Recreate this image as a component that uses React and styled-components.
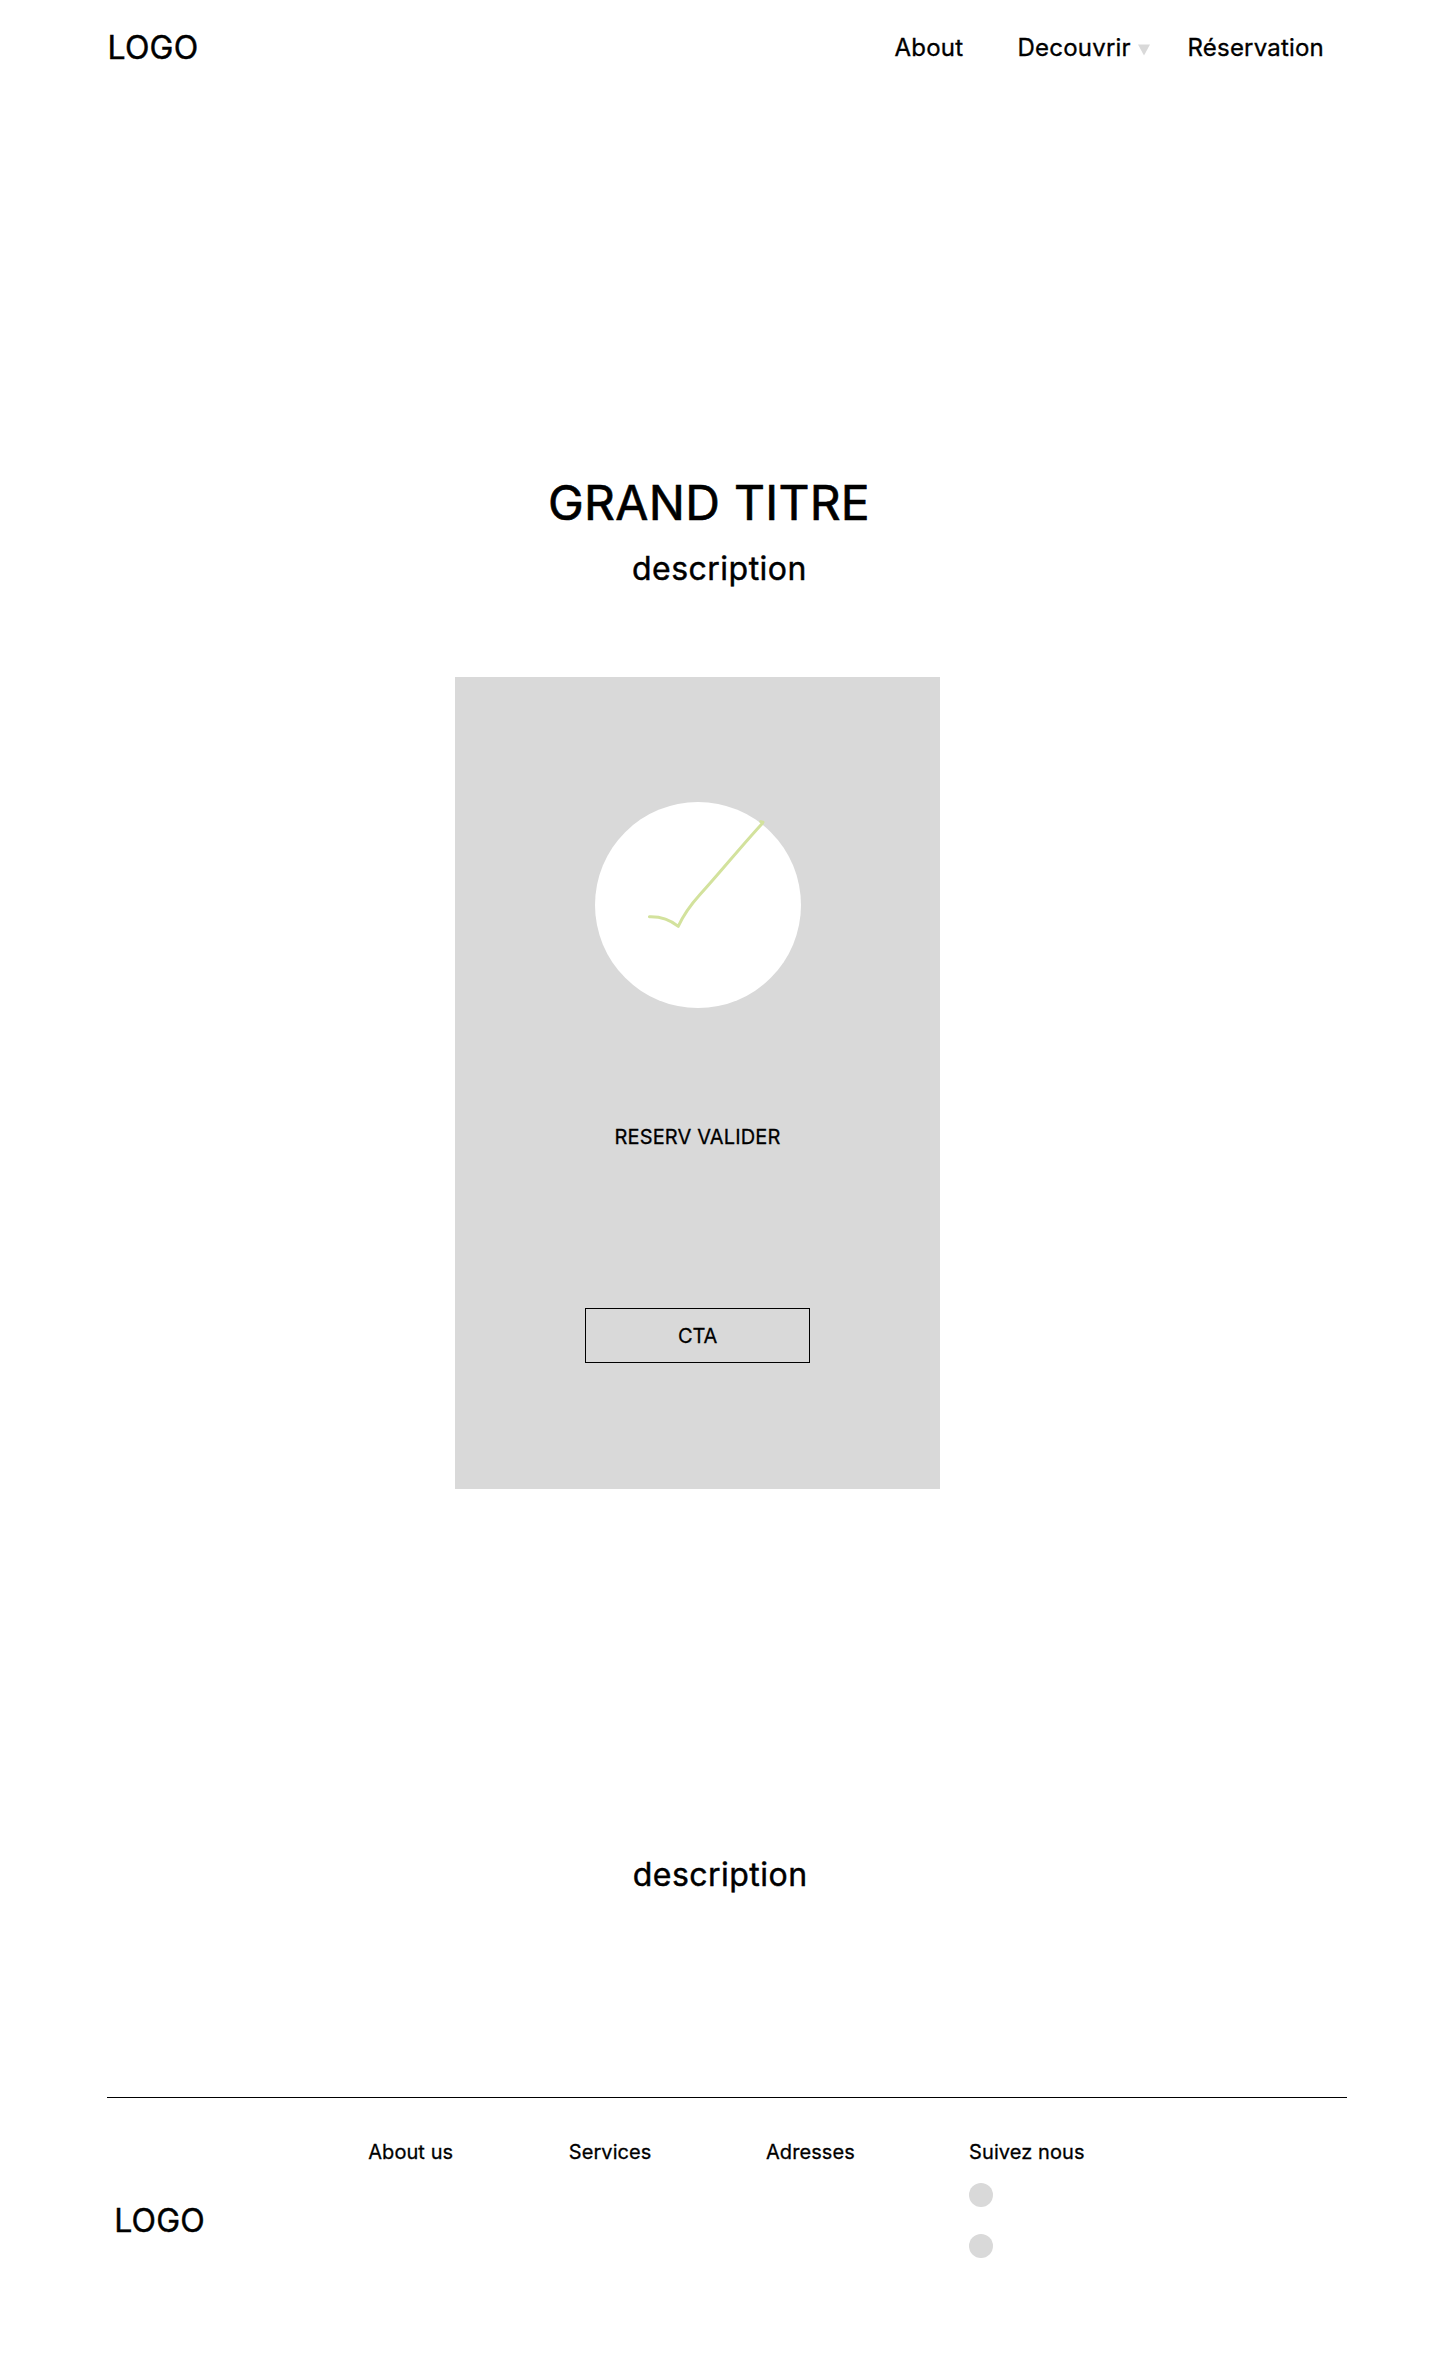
import React from "react";
import styled, { createGlobalStyle } from "styled-components";

const GlobalStyle = createGlobalStyle`
  *, *::before, *::after {
    box-sizing: border-box;
    -webkit-text-stroke: 0.014em #000;
  }
  body {
    margin: 0;
    background: #fff;
    color: #000;
    font-family: Inter, "Liberation Sans", sans-serif;
    font-weight: 400;
  }
`;

const Page = styled.div`
  display: flex;
  flex-direction: column;
  width: 1440px;
  height: 2371px;
  overflow: hidden;
`;

const Header = styled.header`
  display: flex;
  align-items: flex-start;
  justify-content: space-between;
  height: 96px;
  padding: 28px 116px 0 107.5px;
`;

const Logo = styled.div`
  font-size: 32px;
  line-height: 40px;
  letter-spacing: 0.2px;
`;

const Nav = styled.nav`
  display: flex;
  align-items: center;
  padding-top: 5px;
`;

const NavLink = styled.a`
  display: flex;
  align-items: center;
  gap: 7.3px;
  margin-left: ${(p) => p.$space || 0}px;
  font-size: 24px;
  line-height: 30px;
  letter-spacing: 0.2px;
`;

const Caret = styled.svg`
  display: block;
  flex: none;
  width: 12px;
  height: 12px;
  margin-top: 3px;
`;

const Main = styled.main`
  display: flex;
  flex-direction: column;
  align-items: flex-start;
  padding-top: 377px;
`;

const Title = styled.h1`
  margin: 0 0 0 548px;
  font-size: 48px;
  font-weight: 400;
  line-height: 60px;
  letter-spacing: 0.3px;
`;

const Description = styled.p`
  margin: ${(p) => p.$top}px 0 0 ${(p) => p.$left}px;
  font-size: 32px;
  line-height: 40px;
  letter-spacing: 0.48px;
`;

const Card = styled.section`
  display: flex;
  flex-direction: column;
  align-items: center;
  width: 485px;
  height: 812px;
  margin: 88px 0 0 455px;
  padding-top: 125px;
  background: #d9d9d9;
`;

const Badge = styled.div`
  width: 206px;
  height: 206px;
  margin-left: 1px;
  border-radius: 50%;
  background: #fff;

  svg {
    display: block;
    width: 100%;
    height: 100%;
    overflow: visible;
  }
`;

const CardText = styled.p`
  margin: 117px 0 0;
  font-size: 20px;
  line-height: 24px;
  letter-spacing: 0.15px;
`;

const CardButton = styled.button`
  width: 225px;
  height: 55px;
  margin-top: 159px;
  padding: 0;
  border: 1px solid #000;
  background: transparent;
  color: #000;
  font: inherit;
  font-size: 20px;
  line-height: 24px;
  letter-spacing: -0.2px;
`;

const Footer = styled.footer`
  display: grid;
  grid-template-columns: 261.2px 200.6px 197.2px 203.1px auto;
  align-items: start;
  width: 1240px;
  margin: auto 0 0 107px;
  height: 274px;
  border-top: 1px solid #000;
  padding-top: 42px;
`;

const FooterBrand = styled.div`
  padding: 61px 0 0 7.2px;
`;

const FooterColumn = styled.div`
  display: flex;
  flex-direction: column;
  font-size: 20px;
  line-height: 24px;
  letter-spacing: 0.08px;
`;

const Socials = styled.div`
  display: flex;
  flex-direction: column;
  gap: 27px;
  margin-top: 19px;
`;

const Dot = styled.span`
  width: 24px;
  height: 24px;
  border-radius: 50%;
  background: #d9d9d9;
`;

export default function App() {
  return (
    <Page>
      <GlobalStyle />
      <Header>
        <Logo>LOGO</Logo>
        <Nav>
          <NavLink>About</NavLink>
          <NavLink $space={54.3}>
            Decouvrir
            <Caret viewBox="0 0 12 12">
              <path d="M0 0.5H12L6 11.5Z" fill="#d9d9d9" />
            </Caret>
          </NavLink>
          <NavLink $space={37.5}>Réservation</NavLink>
        </Nav>
      </Header>
      <Main>
        <Title>GRAND TITRE</Title>
        <Description $top={16} $left={632}>description</Description>
        <Card>
          <Badge>
            <svg viewBox="0 0 206 206" fill="none" stroke="#d3e29d" strokeWidth="3" strokeLinecap="round" strokeLinejoin="round">
              <path d="M54.4 114.7C65 114.4 75.5 118 83.3 124.3C85.5 119.5 90.5 108.5 105 92.5C125 70.5 146 44.5 167.5 21.2L165.8 19.6L168 20.2" />
            </svg>
          </Badge>
          <CardText>RESERV VALIDER</CardText>
          <CardButton>CTA</CardButton>
        </Card>
        <Description $top={366} $left={632.7}>description</Description>
      </Main>
      <Footer>
        <FooterBrand>
          <Logo>LOGO</Logo>
        </FooterBrand>
        <FooterColumn>About us</FooterColumn>
        <FooterColumn>Services</FooterColumn>
        <FooterColumn>Adresses</FooterColumn>
        <FooterColumn>
          Suivez nous
          <Socials>
            <Dot />
            <Dot />
          </Socials>
        </FooterColumn>
      </Footer>
    </Page>
  );
}
